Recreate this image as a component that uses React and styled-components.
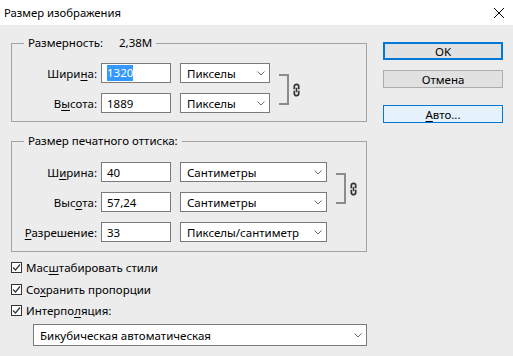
import React from 'react';
import styled, { createGlobalStyle } from 'styled-components';

const GlobalStyle = createGlobalStyle`
    html, body {
        margin: 0;
        padding: 0;
        background: #ececec;
    }
`;

const Window = styled.div`
    width: 513px;
    height: 356px;
    display: flex;
    flex-direction: column;
    background: #ececec;
    font-family: "Noto Sans", "Liberation Sans", sans-serif;
    font-size: 11.5px;
    color: #000;
    overflow: hidden;
`;

const TitleBar = styled.div`
    height: 25px;
    flex-shrink: 0;
    background: #fff;
    display: flex;
    align-items: center;
    justify-content: space-between;
    padding: 0 9px 0 4px;
    font-size: 11.3px;
`;

const Body = styled.div`
    display: flex;
    flex: 1;
`;

const LeftCol = styled.div`
    width: 356px;
    margin-left: 11px;
    display: flex;
    flex-direction: column;
`;

const RightCol = styled.div`
    width: 120px;
    margin-left: 16px;
    padding-top: 17px;
    display: flex;
    flex-direction: column;
`;

const Group = styled.fieldset`
    margin: ${p => p.$top}px 0 0 0;
    padding: ${p => p.$pt}px 0 ${p => p.$pb}px 0;
    border: 1px solid #a3a3a3;
    min-width: 0;
`;

const Legend = styled.legend`
    margin-left: 12px;
    padding: 0 4px;
    line-height: 16px;
    color: #000;
`;

const Value = styled.span`
    margin-left: 16px;
`;

const GroupInner = styled.div`
    display: flex;
    align-items: flex-start;
`;

const Rows = styled.div`
    display: flex;
    flex-direction: column;
    gap: 10px;
`;

const Row = styled.div`
    display: flex;
    align-items: center;
    height: 20px;
`;

const Label = styled.label`
    width: 85px;
    margin-right: 4px;
    text-align: right;
    white-space: nowrap;
`;

const Key = styled.span`
    text-decoration: underline;
    text-underline-offset: 2px;
`;

const Input = styled.div`
    width: 70px;
    height: 20px;
    box-sizing: border-box;
    border: 1px solid #7a7a7a;
    background: #fff;
    padding: 0 5px;
    display: flex;
    align-items: center;
`;

const Selected = styled.span`
    background: #3399ff;
    color: #fff;
    line-height: 16px;
`;

const Select = styled.div`
    width: ${p => p.$w}px;
    height: ${p => p.$h || 20}px;
    margin-left: ${p => p.$ml ?? 9}px;
    margin-top: ${p => p.$mt || 0}px;
    box-sizing: border-box;
    border: 1px solid #7a7a7a;
    background: #fff;
    padding: 0 4px 0 6px;
    display: flex;
    align-items: center;
    justify-content: space-between;
    white-space: nowrap;
`;

const Link = styled.div`
    display: flex;
    align-items: center;
    margin-left: 9px;
    padding-top: 11px;
`;

const Bracket = styled.div`
    width: 8px;
    height: 27px;
    border: 2px solid #8c8c8c;
    border-left: none;
`;

const ChainIcon = styled.svg`
    margin-left: 4px;
`;

const CheckList = styled.div`
    margin-top: 5px;
    display: flex;
    flex-direction: column;
`;

const CheckRow = styled.div`
    height: 21.5px;
    display: flex;
    align-items: center;
`;

const Box = styled.div`
    width: 11px;
    height: 11px;
    box-sizing: border-box;
    border: 1px solid #333;
    background: #fff;
    display: flex;
    align-items: center;
    justify-content: center;
    margin-right: 4px;
`;

const Button = styled.div`
    height: 18px;
    box-sizing: border-box;
    margin-top: ${p => p.$mt || 0}px;
    display: flex;
    align-items: center;
    justify-content: center;
    background: ${p => (p.$hover ? '#e5f1fb' : '#e1e1e1')};
    border: ${p => (p.$default ? '2px solid #0078d7' : p.$hover ? '1px solid #0078d7' : '1px solid #adadad')};
`;

const Chevron = () => (
    <svg width="8" height="5" viewBox="0 0 8 5">
        <polyline points="0.5,0.5 4,4 7.5,0.5" fill="none" stroke="#6b6b6b" strokeWidth="1" />
    </svg>
);

const Chain = () => (
    <ChainIcon width="7" height="14" viewBox="0 0 7 14">
        <path d="M1.3 6.2 V3.5 a2.2 2.2 0 0 1 4.4 0 V6.2" fill="none" stroke="#333" strokeWidth="1.7" />
        <path d="M1.3 7.8 V10.5 a2.2 2.2 0 0 0 4.4 0 V7.8" fill="none" stroke="#333" strokeWidth="1.7" />
        <path d="M3.5 4.8 V9.2" fill="none" stroke="#333" strokeWidth="1.6" />
    </ChainIcon>
);

const Check = () => (
    <svg width="9" height="9" viewBox="0 0 9 9">
        <polyline points="1,4.5 3.5,7 8,1.5" fill="none" stroke="#333" strokeWidth="1.2" />
    </svg>
);

const Field = ({ label, value, unit, width, selected }) => (
    <Row>
        <Label>{label}</Label>
        <Input>{selected ? <Selected>{value}</Selected> : value}</Input>
        <Select $w={width}>
            <span>{unit}</span>
            <Chevron />
        </Select>
    </Row>
);

const CheckItem = ({ children }) => (
    <CheckRow>
        <Box><Check /></Box>
        <span>{children}</span>
    </CheckRow>
);

const App = () => {
    return (
        <Window>
            <GlobalStyle />
            <TitleBar>
                <span>Размер изображения</span>
                <svg width="10" height="10" viewBox="0 0 10 10">
                    <path d="M0 0 L10 10 M10 0 L0 10" stroke="#000" strokeWidth="1" />
                </svg>
            </TitleBar>
            <Body>
                <LeftCol>
                    <Group $top={10} $pt={12} $pb={8}>
                        <Legend>Размерность:<Value>2,38М</Value></Legend>
                        <GroupInner>
                            <Rows>
                                <Field label={<>Шири<Key>н</Key>а:</>} value="1320" unit="Пикселы" width={90} selected />
                                <Field label={<>В<Key>ы</Key>сота:</>} value="1889" unit="Пикселы" width={90} />
                            </Rows>
                            <Link>
                                <Bracket />
                                <Chain />
                            </Link>
                        </GroupInner>
                    </Group>
                    <Group $top={11} $pt={13} $pb={9}>
                        <Legend>Размер печатного оттиска:</Legend>
                        <GroupInner>
                            <Rows>
                                <Field label={<>Ш<Key>и</Key>рина:</>} value="40" unit="Сантиметры" width={147} />
                                <Field label={<>Выс<Key>о</Key>та:</>} value="57,24" unit="Сантиметры" width={147} />
                                <Field label={<><Key>Р</Key>азрешение:</>} value="33" unit="Пикселы/сантиметр" width={147} />
                            </Rows>
                            <Link>
                                <Bracket />
                                <Chain />
                            </Link>
                        </GroupInner>
                    </Group>
                    <CheckList>
                        <CheckItem>Мас<Key>ш</Key>табировать стили</CheckItem>
                        <CheckItem>Со<Key>х</Key>ранить пропорции</CheckItem>
                        <CheckItem>Интерпо<Key>л</Key>яция:</CheckItem>
                    </CheckList>
                    <Select $w={334} $h={22} $ml={22} $mt={2.5}>
                        <span>Бикубическая автоматическая</span>
                        <Chevron />
                    </Select>
                </LeftCol>
                <RightCol>
                    <Button $default>OK</Button>
                    <Button $mt={10}>Отмена</Button>
                    <Button $mt={17} $hover><span><Key>А</Key>вто...</span></Button>
                </RightCol>
            </Body>
        </Window>
    );
};

export default App;
